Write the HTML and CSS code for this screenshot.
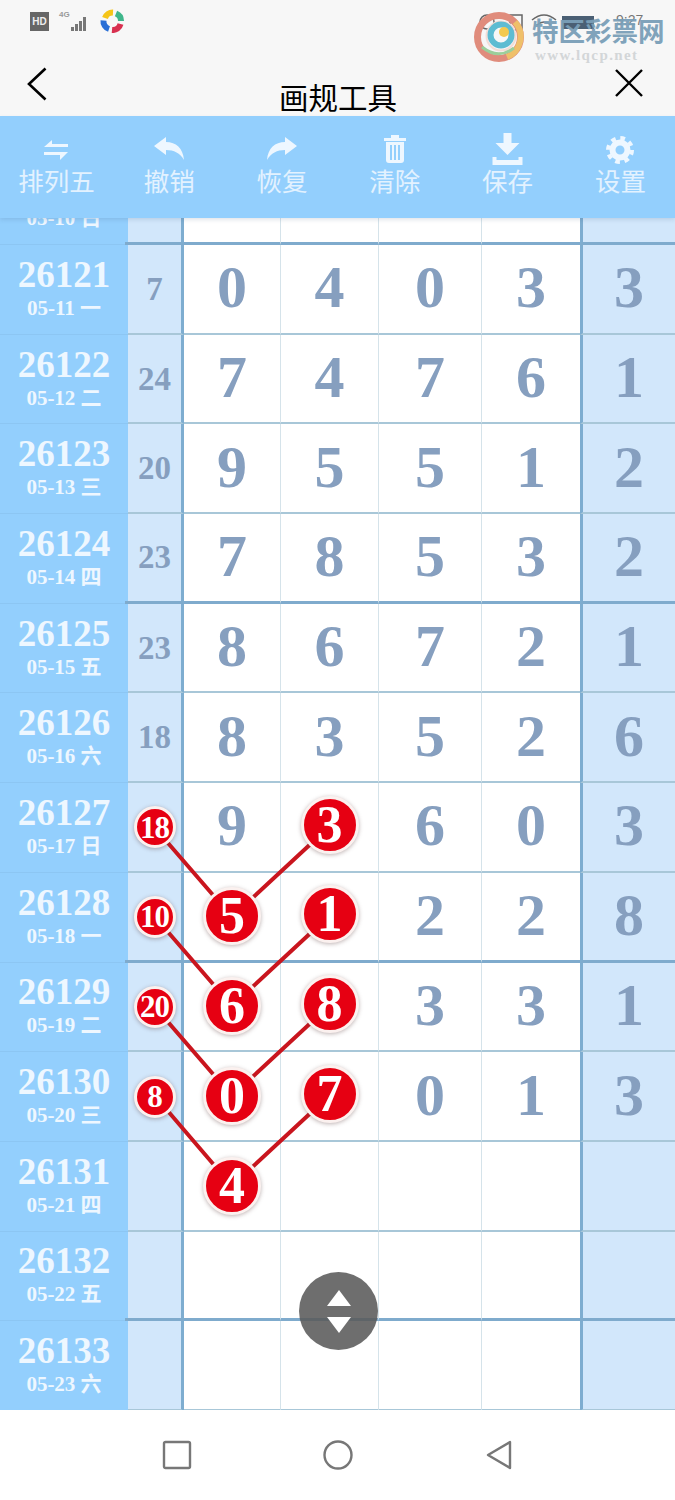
FILE: index.html
```html
<!DOCTYPE html>
<html lang="zh">
<head>
    <meta charset="UTF-8">
    <meta name="viewport" content="width=device-width, initial-scale=1.0">
    <title>画规工具</title>
    <link rel="stylesheet" href="styles.css">
</head>
<body>
<div class="page">
    <header class="top">
        <div class="status">
            <span class="hd">HD</span>
            <svg class="signal" viewBox="0 0 30 20"><path d="M12 16h3v4h-3zM16 13h3v7h-3zM20 10h3v10h-3zM24 6h3v14h-3z" fill="#777"/></svg>
            <span class="net">4G</span>
            <svg class="app_icon" viewBox="0 0 24 24" fill="none" stroke-width="6">
                <path d="M5 9A8 8 0 0 1 13 3.500" stroke="#f5c518"/>
                <path d="M16 4.500A8 8 0 0 1 21 12" stroke="#3fb68b"/>
                <path d="M20.500 15A8 8 0 0 1 12 21" stroke="#d8304f"/>
                <path d="M9 20A8 8 0 0 1 3.500 11.500" stroke="#2a6fd6"/>
            </svg>
        </div>
        <div class="watermark">
            <svg class="mark_status" viewBox="0 0 190 24" fill="none" stroke="#666" stroke-width="1.500">
                <circle cx="17" cy="12" r="7"/>
                <rect x="40" y="5" width="12" height="15"/>
                <path d="M62 10q12-10 24 0M67 15q7-6 14 0"/>
                <rect x="92" y="6" width="32" height="13" fill="#4a5f74" stroke="none"/>
            </svg>
            <svg class="mark_logo" viewBox="0 0 50 50" fill="none">
                <circle cx="25" cy="25" r="21.500" stroke="#e08c7c" stroke-width="7"/>
                <path d="M41 10a22 22 0 0 1-8 35" stroke="#efc06a" stroke-width="6"/>
                <circle cx="27" cy="24" r="14.500" stroke="#f3ddd6" stroke-width="2"/>
                <circle cx="27" cy="23" r="10.500" stroke="#5dbcd2" stroke-width="6"/>
                <circle cx="30" cy="20" r="5" fill="#f3c94e"/>
                <path d="M8 35q16 13 32 1" stroke="#9ccf9a" stroke-width="3"/>
            </svg>
            <span class="mark_time">9:27</span>
            <span class="mark_name">特区彩票网</span>
            <span class="mark_url">www.lqcp.net</span>
        </div>
        <div class="title_bar">
            <svg class="back" viewBox="0 0 20 34" fill="none" stroke="#000" stroke-width="2.600"><path d="M18.500 1.500L2 17l16.500 15.500"/></svg>
            <h1>画规工具</h1>
            <svg class="close" viewBox="0 0 30 30" fill="none" stroke="#000" stroke-width="2.400"><path d="M2 2l26 26M28 2L2 28"/></svg>
        </div>
    </header>

    <nav class="toolbar">
        <div class="tool">
            <svg class="ico_swap" viewBox="0 0 26 22"><path d="M1 8L9 1v4h16v3zM1 13h24l-8 8v-5H1z"/></svg>
            <span>排列五</span>
        </div>
        <div class="tool">
            <svg class="ico_arrow" viewBox="0 0 30 24"><path d="M0 9L12 0v5c10 0 17 6 18 18-4-7-10-10-18-10v5z"/></svg>
            <span>撤销</span>
        </div>
        <div class="tool">
            <svg class="ico_arrow" viewBox="0 0 30 24"><path d="M30 9L18 0v5C8 5 1 11 0 23c4-7 10-10 18-10v5z"/></svg>
            <span>恢复</span>
        </div>
        <div class="tool">
            <svg class="ico_trash" viewBox="0 0 24 28"><path fill-rule="evenodd" d="M1 3h7V0h8v3h7v3H1zM3 7h18v18q0 3-3 3H6q-3 0-3-3zM7 10v15h2V10zM11 10v15h2V10zM15 10v15h2V10z"/></svg>
            <span>清除</span>
        </div>
        <div class="tool">
            <svg class="ico_save" viewBox="0 0 30 32"><path d="M11 0h8v10h8L15 22 3 10h8zM0 24h4v3h22v-3h4v8H0z"/></svg>
            <span>保存</span>
        </div>
        <div class="tool">
            <svg class="ico_gear" viewBox="0 0 28 28" fill="none" stroke="#eef7ff"><circle cx="14" cy="14" r="7.500" stroke-width="6"/><circle cx="14" cy="14" r="12" stroke-width="4" stroke-dasharray="4.710 4.710"/></svg>
            <span>设置</span>
        </div>
    </nav>

    <main class="board_wrap">
        <div class="board">
            <div class="row row_heavy">
                <div class="date"><b>&nbsp;</b><small>05-10 日</small></div>
                <div class="sum"></div><div class="cell"></div><div class="cell"></div><div class="cell"></div><div class="cell"></div><div class="extra"></div>
            </div>
            <div class="row">
                <div class="date"><b>26121</b><small>05-11 一</small></div>
                <div class="sum">7</div><div class="cell">0</div><div class="cell">4</div><div class="cell">0</div><div class="cell">3</div><div class="extra">3</div>
            </div>
            <div class="row">
                <div class="date"><b>26122</b><small>05-12 二</small></div>
                <div class="sum">24</div><div class="cell">7</div><div class="cell">4</div><div class="cell">7</div><div class="cell">6</div><div class="extra">1</div>
            </div>
            <div class="row">
                <div class="date"><b>26123</b><small>05-13 三</small></div>
                <div class="sum">20</div><div class="cell">9</div><div class="cell">5</div><div class="cell">5</div><div class="cell">1</div><div class="extra">2</div>
            </div>
            <div class="row row_heavy">
                <div class="date"><b>26124</b><small>05-14 四</small></div>
                <div class="sum">23</div><div class="cell">7</div><div class="cell">8</div><div class="cell">5</div><div class="cell">3</div><div class="extra">2</div>
            </div>
            <div class="row">
                <div class="date"><b>26125</b><small>05-15 五</small></div>
                <div class="sum">23</div><div class="cell">8</div><div class="cell">6</div><div class="cell">7</div><div class="cell">2</div><div class="extra">1</div>
            </div>
            <div class="row">
                <div class="date"><b>26126</b><small>05-16 六</small></div>
                <div class="sum">18</div><div class="cell">8</div><div class="cell">3</div><div class="cell">5</div><div class="cell">2</div><div class="extra">6</div>
            </div>
            <div class="row">
                <div class="date"><b>26127</b><small>05-17 日</small></div>
                <div class="sum"><span class="ball_s">18</span></div><div class="cell">9</div><div class="cell"><span class="ball ball_up">3</span></div><div class="cell">6</div><div class="cell">0</div><div class="extra">3</div>
            </div>
            <div class="row row_heavy">
                <div class="date"><b>26128</b><small>05-18 一</small></div>
                <div class="sum"><span class="ball_s">10</span></div><div class="cell"><span class="ball">5</span></div><div class="cell"><span class="ball ball_up">1</span></div><div class="cell">2</div><div class="cell">2</div><div class="extra">8</div>
            </div>
            <div class="row">
                <div class="date"><b>26129</b><small>05-19 二</small></div>
                <div class="sum"><span class="ball_s">20</span></div><div class="cell"><span class="ball">6</span></div><div class="cell"><span class="ball ball_up">8</span></div><div class="cell">3</div><div class="cell">3</div><div class="extra">1</div>
            </div>
            <div class="row">
                <div class="date"><b>26130</b><small>05-20 三</small></div>
                <div class="sum"><span class="ball_s">8</span></div><div class="cell"><span class="ball">0</span></div><div class="cell"><span class="ball ball_up">7</span></div><div class="cell">0</div><div class="cell">1</div><div class="extra">3</div>
            </div>
            <div class="row">
                <div class="date"><b>26131</b><small>05-21 四</small></div>
                <div class="sum"></div><div class="cell"><span class="ball">4</span></div><div class="cell"></div><div class="cell"></div><div class="cell"></div><div class="extra"></div>
            </div>
            <div class="row row_heavy">
                <div class="date"><b>26132</b><small>05-22 五</small></div>
                <div class="sum"></div><div class="cell"></div><div class="cell"></div><div class="cell"></div><div class="cell"></div><div class="extra"></div>
            </div>
            <div class="row">
                <div class="date"><b>26133</b><small>05-23 六</small></div>
                <div class="sum"></div><div class="cell"></div><div class="cell"></div><div class="cell"></div><div class="cell"></div><div class="extra"></div>
            </div>
        </div>
        <!-- lines between the balls, page coordinates -->
        <svg class="links" viewBox="0 218 675 1192" fill="none" stroke="#c9151e" stroke-width="4">
            <path d="M155 828L232 917M330 826L232 917"/>
            <path d="M155 917L232 1006M330 915L232 1006"/>
            <path d="M155 1007L232 1096M330 1005L232 1096"/>
            <path d="M155 1096L232 1186M330 1095L232 1186"/>
        </svg>
        <div class="scroll_btn">
            <i class="tri_up"></i>
            <i class="tri_down"></i>
        </div>
    </main>

    <footer class="nav_bar">
        <svg class="nav_ico" viewBox="0 0 30 30" fill="none" stroke="#777" stroke-width="2.400"><rect x="2" y="2" width="26" height="26" rx="1.500"/></svg>
        <svg class="nav_ico" viewBox="0 0 30 30" fill="none" stroke="#777" stroke-width="2.400"><circle cx="15" cy="15" r="13.500"/></svg>
        <svg class="nav_ico" viewBox="0 0 30 30" fill="none" stroke="#777" stroke-width="2.400" stroke-linejoin="round"><path d="M26 2v26L4 15z"/></svg>
    </footer>
</div>
</body>
</html>
```

FILE: styles.css
```css
* {margin:0; padding:0; box-sizing:border-box;}
html, body {background:#fff;}
.page {
    width:675px; height:1500px; overflow:hidden;
    display:flex; flex-direction:column;
    font-family:"Noto Sans CJK SC", "Noto Sans", sans-serif;
}

/* top */
.top {height:116px; background:#f7f7f7; position:relative; flex:none;}
.status {height:42px; padding:10px 0 0 30px; display:flex; align-items:flex-start; position:relative;}
.hd {
    width:19px; height:19px; margin-top:2px; background:#666; color:#eee;
    font:bold 10px/19px "Liberation Sans", sans-serif; text-align:center;
}
.signal {width:30px; height:20px; margin:1px 0 0 10px;}
.net {
    position:absolute; left:59px; top:10px; color:#999;
    font:bold 8px/10px "Liberation Sans", sans-serif;
}
.app_icon {width:24px; height:24px; margin-left:11px; margin-top:-1px;}
.watermark {position:absolute; left:470px; top:8px; width:200px; height:56px;}
.mark_status {position:absolute; left:0; top:2px; width:190px; height:24px;}
.mark_logo {position:absolute; left:4px; top:4px; width:50px; height:50px;}
.mark_time {position:absolute; left:146px; top:3px; color:#777; font:14px/18px "Liberation Sans", sans-serif;}
.mark_name {
    position:absolute; left:62px; top:7px; color:#7a9fb8; opacity:0.95;
    font-size:26.500px; line-height:30px; font-weight:700; white-space:nowrap;
}
.mark_url {
    position:absolute; left:65px; top:38px; color:#d3d6d8; letter-spacing:1.400px;
    font:bold 15px/18px "Liberation Serif", serif; white-space:nowrap;
}
.title_bar {height:74px; padding:0 31px 0 27px; display:flex; justify-content:space-between; position:relative;}
.title_bar h1 {
    font-size:29.500px; line-height:40px; font-weight:400; color:#000;
    position:absolute; left:279px; top:34px; white-space:nowrap;
}
.back {width:20px; height:34px; margin-top:25px;}
.close {width:30px; height:30px; margin-top:26px;}

/* tools */
.toolbar {
    height:102px; background:#93cffd; flex:none; position:relative; z-index:3;
    display:grid; grid-template-columns:repeat(6, 112.800px);
    box-shadow:0 2px 4px rgba(60,90,120,0.15);
}
.tool {height:102px; position:relative; display:flex; flex-direction:column; align-items:center; justify-content:flex-end; padding-bottom:21px;}
.tool span {font-size:25.500px; line-height:34px; color:#e3f2ff;}
.tool svg {fill:#eef7ff; position:absolute;}
.ico_swap {width:26px; height:22px; top:23px;}
.ico_arrow {width:30px; height:24px; top:21px;}
.ico_trash {width:24px; height:28px; top:19px;}
.ico_save {width:31px; height:32px; top:17px;}
.ico_gear {width:28px; height:28px; top:20px; fill:none !important;}

/* board */
.board_wrap {height:1192px; position:relative; overflow:hidden; flex:none; background:#fff;}
.board {margin-top:-62.700px;}
.row {
    height:89.700px; display:grid;
    grid-template-columns:128px 56px 97px 98px 103px 98px 95px;
}
.row > div {
    border-bottom:2px solid #a8c7d8; display:flex; align-items:center; justify-content:center;
    font-family:"Liberation Serif", serif; font-weight:700; color:#869fbf;
    font-size:60px; line-height:1;
}
.row_heavy > div {border-bottom:3px solid #7fabcd;}
.row > .date {
    background:#93cffd; border-bottom:1px solid #8cc6f3; position:relative;
    flex-direction:column; color:#eef7ff; padding-bottom:2px;
}
.row_heavy > .date::after {
    content:""; position:absolute; right:0; bottom:-1px; width:3px; height:3px; background:#7fabcd;
}
.date b {font-size:37px; line-height:37px;}
.date small {font-size:21px; line-height:25px; margin-top:3px; font-family:"Liberation Serif", "Noto Sans CJK SC", serif;}
.row > .sum {background:#d2e7fb; font-size:33px; border-right:3px solid #7eadd0; padding-top:1px;}
.row > .cell {background:#fff; border-right:1px solid #d5e3ea; padding-bottom:3px;}
.row > .cell:nth-child(6) {border-right:0;}
.row > .extra {background:#d2e7fb; border-left:3px solid #7eadd0; padding-bottom:3px;}
.ball, .ball_s {
    display:flex; align-items:center; justify-content:center; flex:none;
    position:relative; z-index:2; color:#fff; background:#e60012; border-radius:50%;
    border:solid #fbf1ef; box-shadow:0 1px 4px rgba(90,60,60,0.4);
}
.ball {width:58px; height:58px; border-width:3.500px; font-size:52px; margin-top:3px;}
.ball_up {margin-bottom:4px;}
.ball_s {width:42px; height:42px; border-width:3px; font-size:31px; letter-spacing:-1px;}
.links {position:absolute; left:0; top:0; width:675px; height:1192px; z-index:1;}
.scroll_btn {
    position:absolute; left:299px; top:1054px; width:79px; height:78px; border-radius:50%;
    background:rgba(90,90,90,0.88); z-index:2;
    display:flex; flex-direction:column; align-items:center; justify-content:center; gap:11px;
}
.tri_up, .tri_down {width:0; height:0; border-left:12px solid transparent; border-right:12px solid transparent;}
.tri_up {border-bottom:16px solid #fff;}
.tri_down {border-top:16px solid #fff;}

/* android keys */
.nav_bar {height:90px; background:#fff; flex:none; display:flex; justify-content:center; align-items:center; gap:131px;}
.nav_ico {width:30px; height:30px;}
```
